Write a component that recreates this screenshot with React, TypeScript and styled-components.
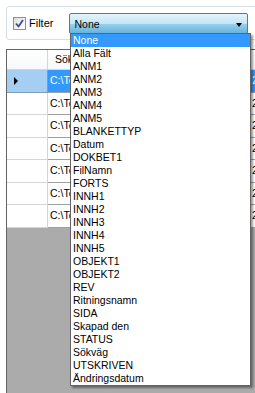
import styled, { createGlobalStyle } from "styled-components";

const GlobalStyle = createGlobalStyle`
  html, body {
    margin: 0;
    padding: 0;
    background: #ffffff;
  }
  body {
    font-family: "Liberation Sans", Arial, sans-serif;
    font-size: 11px;
  }
`;

const fields = [
  "None",
  "Alla Fält",
  "ANM1",
  "ANM2",
  "ANM3",
  "ANM4",
  "ANM5",
  "BLANKETTYP",
  "Datum",
  "DOKBET1",
  "FilNamn",
  "FORTS",
  "INNH1",
  "INNH2",
  "INNH3",
  "INNH4",
  "INNH5",
  "OBJEKT1",
  "OBJEKT2",
  "REV",
  "Ritningsnamn",
  "SIDA",
  "Skapad den",
  "STATUS",
  "Sökväg",
  "UTSKRIVEN",
  "Ändringsdatum",
];

const rows = [
  { path: "C:\\Temp\\ritning_001.dwg", date: "2011-03-14" },
  { path: "C:\\Temp\\ritning_002.dwg", date: "2011-03-14" },
  { path: "C:\\Temp\\ritning_003.dwg", date: "2011-03-15" },
  { path: "C:\\Temp\\ritning_004.dwg", date: "2011-03-15" },
  { path: "C:\\Temp\\ritning_005.dwg", date: "2011-03-16" },
  { path: "C:\\Temp\\ritning_006.dwg", date: "2011-03-16" },
  { path: "C:\\Temp\\ritning_007.dwg", date: "2011-03-17" },
];

const Window = styled.div`
  position: relative;
  width: 255px;
  height: 393px;
  overflow: hidden;
  background: #ffffff;
  display: flex;
  flex-direction: column;
`;

const FilterBox = styled.div`
  box-sizing: border-box;
  margin: 6px 0 0 6px;
  width: 280px;
  height: 34px;
  border: 1px solid #d5dfe5;
  border-radius: 3px;
  display: flex;
  align-items: flex-start;
  padding-left: 6px;
  flex-shrink: 0;
`;

const CheckBox = styled.span`
  box-sizing: border-box;
  margin-top: 10px;
  width: 13px;
  height: 13px;
  border: 1px solid #8e8f8f;
  background: linear-gradient(135deg, #dcdcdc 0%, #f4f4f4 60%, #ffffff 100%);
  display: flex;
  align-items: center;
  justify-content: center;
`;

const Label = styled.span`
  margin: 10px 0 0 3px;
  line-height: 13px;
  font-size: 11px;
  color: #000;
`;

const Combo = styled.div`
  box-sizing: border-box;
  margin: 6px 0 0 16px;
  width: 179px;
  height: 21px;
  border: 1px solid #3c7fb1;
  border-radius: 2px;
  background: linear-gradient(
    to bottom,
    #e5f4fc 0%,
    #c4e5f6 50%,
    #98d1ef 51%,
    #68b3db 100%
  );
  display: flex;
  align-items: center;
  padding: 0 5px 0 4px;
  font-size: 10.5px;
`;

const ComboText = styled.span`
  flex: 1;
`;

const Arrow = styled.span`
  width: 0;
  height: 0;
  border-left: 3.5px solid transparent;
  border-right: 3.5px solid transparent;
  border-top: 4px solid #000;
  margin-top: 2px;
`;

const DropList = styled.ul`
  position: absolute;
  left: 70px;
  top: 33px;
  width: 181px;
  box-sizing: border-box;
  margin: 0;
  padding: 0;
  list-style: none;
  background: #fff;
  border: 1px solid #646464;
  box-shadow: 2px 2px 2px rgba(0, 0, 0, 0.4);
  z-index: 2;
`;

const DropItem = styled.li<{ $active?: boolean }>`
  height: 13px;
  line-height: 13px;
  padding-left: 2px;
  font-size: 10.5px;
  white-space: nowrap;
  background: ${(p) => (p.$active ? "#3399ff" : "transparent")};
  color: ${(p) => (p.$active ? "#fff" : "#000")};
`;

const Grid = styled.div`
  margin: 9px 0 0 6px;
  width: 320px;
  flex: 1;
  border: 1px solid #646464;
  border-bottom: none;
  background: #ababab;
  display: flex;
  flex-direction: column;
`;

const GridRow = styled.div`
  display: grid;
  grid-template-columns: 41px 202px 80px;
`;

const HeaderCell = styled.div<{ $corner?: boolean }>`
  box-sizing: border-box;
  height: 20px;
  background: linear-gradient(to bottom, #ffffff 0%, #f7f8fa 100%);
  border-right: 1px solid #d5d5d5;
  border-bottom: 1px solid #d5d5d5;
  font-size: 10.5px;
  line-height: 19px;
  padding-left: ${(p) => (p.$corner ? 0 : 7)}px;
  white-space: nowrap;
  overflow: hidden;
`;

const RowHead = styled.div<{ $selected?: boolean }>`
  box-sizing: border-box;
  height: 22.5px;
  background: ${(p) => (p.$selected ? "#a4cff2" : "#ffffff")};
  border-right: 1px solid ${(p) => (p.$selected ? "#7f9db9" : "#d5d5d5")};
  border-bottom: 1px solid ${(p) => (p.$selected ? "#7f9db9" : "#d5d5d5")};
  display: flex;
  align-items: center;
  padding-left: 7px;
`;

const Pointer = styled.span`
  width: 0;
  height: 0;
  border-top: 4px solid transparent;
  border-bottom: 4px solid transparent;
  border-left: 4px solid #000;
`;

const Cell = styled.div<{ $selected?: boolean }>`
  box-sizing: border-box;
  height: 22.5px;
  background: ${(p) => (p.$selected ? "#3399ff" : "#ffffff")};
  color: ${(p) => (p.$selected ? "#ffffff" : "#000000")};
  border-right: 1px solid #a0a0a0;
  border-bottom: 1px solid #a0a0a0;
  font-size: 10.5px;
  line-height: 21px;
  padding-left: 2px;
  white-space: nowrap;
  overflow: hidden;
`;

function CheckMark() {
  return (
    <svg width="9" height="9" viewBox="0 0 9 9">
      <path
        d="M1 4.5 L3.5 7.5 L8 1"
        fill="none"
        stroke="#3c4f8c"
        strokeWidth="1.8"
        strokeLinejoin="round"
      />
    </svg>
  );
}

export default function App() {
  return (
    <Window>
      <GlobalStyle />
      <FilterBox>
        <CheckBox>
          <CheckMark />
        </CheckBox>
        <Label>Filter</Label>
        <Combo>
          <ComboText>None</ComboText>
          <Arrow />
        </Combo>
      </FilterBox>
      <DropList>
        {fields.map((f, i) => (
          <DropItem key={f} $active={i === 0}>
            {f}
          </DropItem>
        ))}
      </DropList>
      <Grid>
        <GridRow>
          <HeaderCell $corner />
          <HeaderCell>Sökväg</HeaderCell>
          <HeaderCell>Ändringsdatum</HeaderCell>
        </GridRow>
        {rows.map((r, i) => (
          <GridRow key={r.path}>
            <RowHead $selected={i === 0}>{i === 0 && <Pointer />}</RowHead>
            <Cell $selected={i === 0}>{r.path}</Cell>
            <Cell $selected={i === 0}>{r.date}</Cell>
          </GridRow>
        ))}
      </Grid>
    </Window>
  );
}
